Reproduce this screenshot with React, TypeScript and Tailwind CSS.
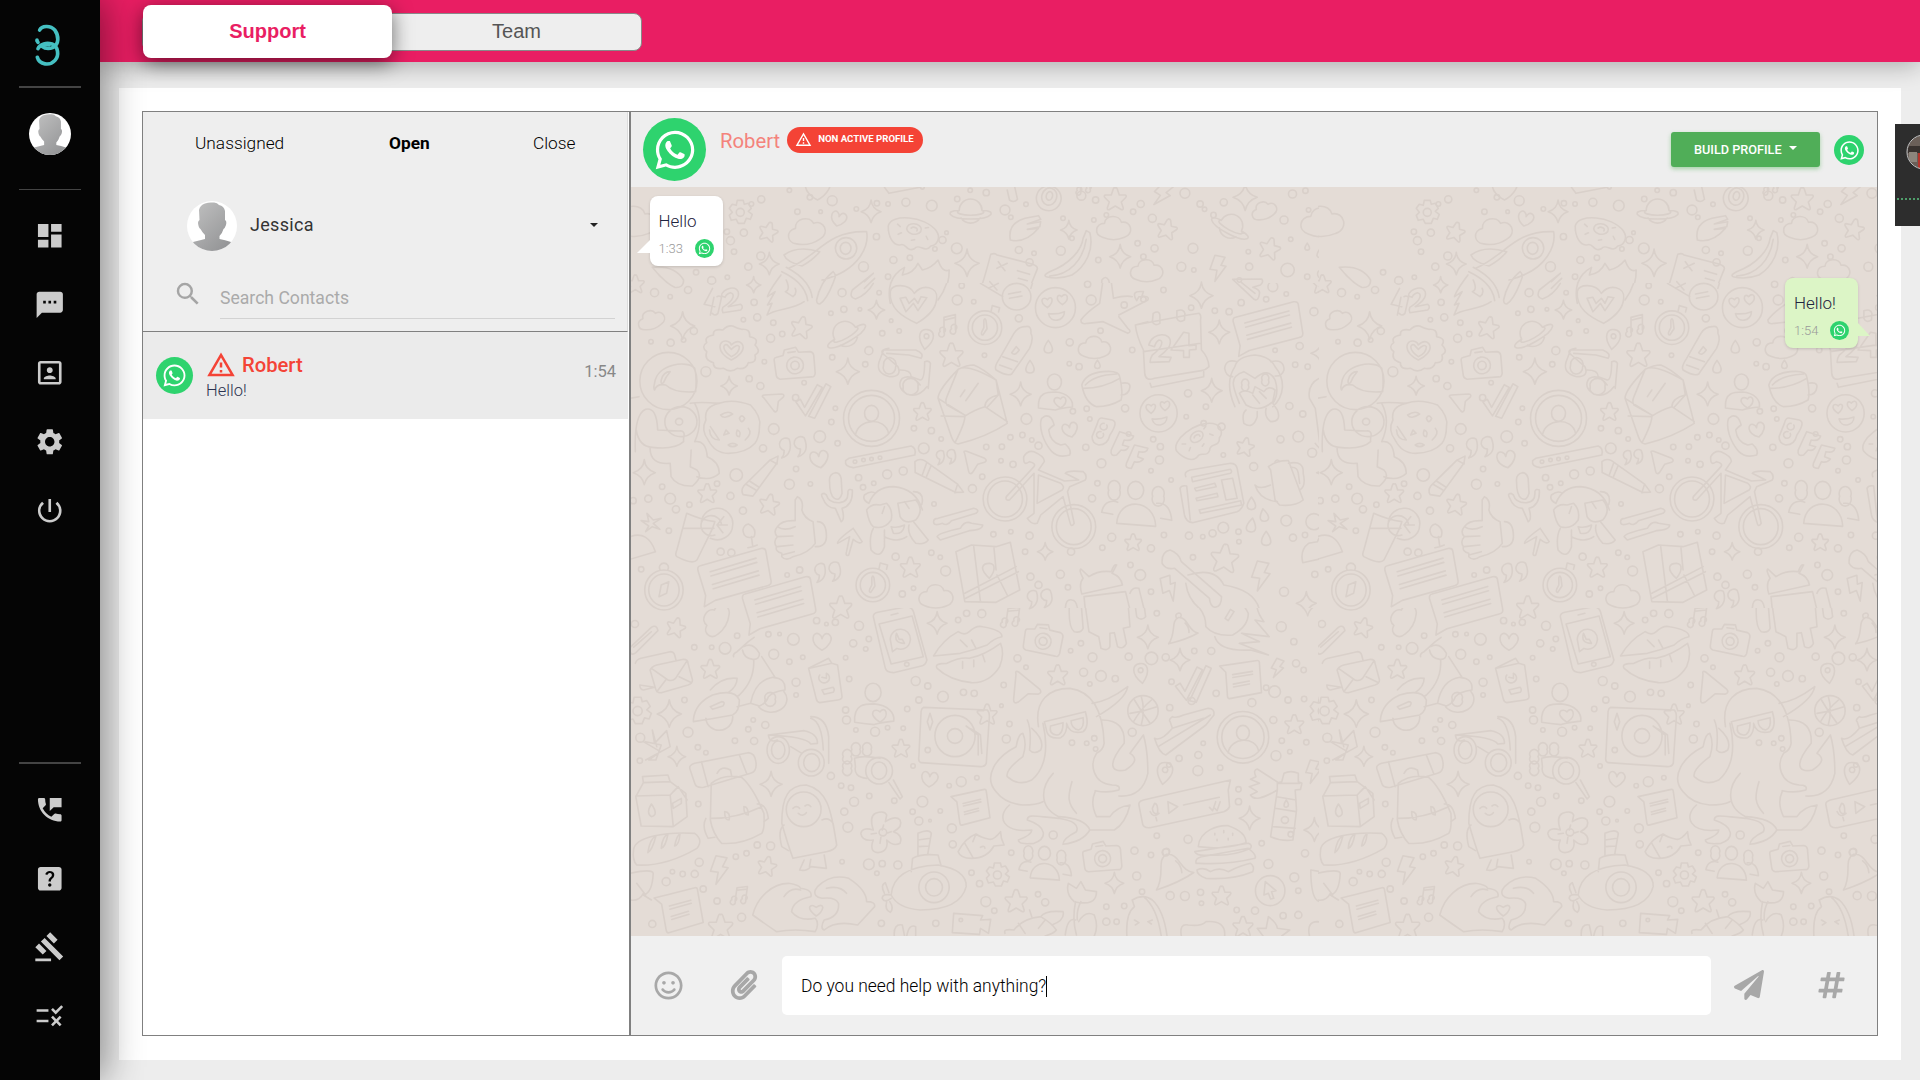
import type { ReactNode } from "react";
import {
  MdDashboard,
  MdGavel,
  MdHelpCenter,
  MdOutlineWarningAmber,
  MdPermPhoneMsg,
  MdPortrait,
  MdPowerSettingsNew,
  MdRule,
  MdSearch,
  MdSettings,
  MdTextsms,
} from "react-icons/md";
import { FaHashtag, FaPaperPlane, FaPaperclip, FaRegSmile, FaWhatsapp } from "react-icons/fa";

/* ---------- Wallpaper doodles ---------- */

const SHAPES: Record<string, string> = {
  star: "M0-11 Q1-12 2-10 L4-4 L10-4 Q12-3 10-1 L6 3 L8 9 Q8 12 5 10 L0 7 L-5 10 Q-8 12 -8 9 L-6 3 L-10-1 Q-12-3 -10-4 L-4-4 L-2-10 Q-1-12 0-11Z",
  spark: "M0-13 Q1-3 11 0 Q2 3 0 12 Q-2 3 -11 0 Q-1-3 0-13Z",
  heart: "M0 9 C-15 1 -9-12 -3-8 Q0-6 0-3 Q2-10 7-8 C14-3 6 6 0 9Z",
  cloud: "M-11 9 C-20 6 -18-5 -9-5 C-8-14 6-14 8-6 C18-8 21 6 11 9 C4 12 -4 12 -11 9Z",
  gear: "M-3-12 H3 L4-8 L8-9 L11-4 L8-1 L12 2 L10 7 L6 6 L4 11 H-2 L-4 7 L-9 8 L-11 3 L-8 0 L-11-4 L-8-8 L-4-7Z M4 0 A4 4 0 1 1 -4 0 A4 4 0 1 1 4 0Z",
  bolt: "M-3-13 L7-11 L3-3 L8-2 L-3 13 L-1 2 L-8 1Z",
  saturn: "M-12-2 A12 12 0 0 1 12-2 M-10 6 A12 12 0 0 0 10 6 M-12-2 C-28-2 -24 7 0 7 C24 7 28-2 12-2 C18 1 8 3 0 3 C-8 3 -18 1 -12-2",
  donut: "M-25-3 C-24-16 10-18 23-5 C30 2 25 10 20 11 C15 20 8 9 4 16 C-3 21 -5 11 -10 14 C-18 17 -24 6 -25-3Z M-6-5 A7 5 0 1 1 8-2 A7 5 0 1 1 -6-5 M-2-4 A3 2 0 1 1 4-2 M-16-6 L-13-4 M-14 4 L-11 2 M0 8 L3 7 M14 2 L16 5 M12-6 L15-7",
  camera: "M-17-8 L-10-9 L-8-14 L3-15 L5-10 L16-9 Q19-8 19-5 L18 12 Q17 16 14 15 L-16 13 Q-19 12 -19 9 L-19-5 Q-19-8 -17-8Z M8 2 A8 8 0 1 1 -8 2 A8 8 0 1 1 8 2Z M4 2 A4 4 0 1 1 -4 2 A4 4 0 1 1 4 2Z M-5-11 H2",
  pin: "M0 10 C-12-3 -7-11 0-11 C7-11 12-3 0 10Z M2.500-4 A2.500 2.500 0 1 1 -2.500-4 A2.500 2.500 0 1 1 2.500-4Z",
  drop: "M0-7 C8 4 4 7 0 7 C-4 7 -8 4 0-7Z",
  clock: "M16 0 A16 16 0 1 1 -16 0 A16 16 0 1 1 16 0Z M12 0 A12 12 0 1 1 -12 0 A12 12 0 1 1 12 0Z M-1-7 Q0-10 1-7 L2 1 L-2 7 Q-4 7 -3 4 L-1 0Z M6-16 L7-21 L14-19 L13-15",
  smiley: "M20 0 A20 20 0 1 1 -20 0 A20 20 0 1 1 20 0Z M-8 0 C-18-7 -12-12 -8-8 C-4-13 0-7 -8 0Z M7-3 C-2-9 3-15 6-11 C12-17 15-8 7-3Z M-7 6 Q2 7 9 4 C9 14 -5 16 -7 6Z",
  message: "M-30-14 L28-20 Q32-20 32-17 L32 11 Q32 15 28 15 L-22 20 L-33 24 L-30 14 L-33-10 Q-33-14 -30-14Z M-22-7 L22-12 M-22-3 L22-8 M-22 5 L22 0 M-22 9 L22 4",
  note: "M-8-18 L18-20 Q20-20 20-18 V14 L-14 18 Q-16 18 -16 15 L-16-10 L-22-17Z M-9-7 L12-9 M-9-4 L12-6 M-9 3 L8 1 M-9 6 L8 4",
  notes: "M-5 8 V-8 L7-11 V5 M-5-5 L7-8 M-5 8 A3 3 0 1 1 -9 7 A3 3 0 1 1 -5 8 M7 5 A3 3 0 1 1 3 4 A3 3 0 1 1 7 5",
  ticks: "M-16 4 L-12 1 L-7 8 L2-15 L7-13 L-5 16Z M-2 16 L10-17 L15-15 L4 17Z",
  play: "M-10-9 Q-12-12 -8-11 L10-4 Q13-2 10 0 L3 2 L-2 10 Q-5 13 -6 9Z",
  quote: "M-3-6 A5 5 0 1 0 -7 3 Q-7 7 -9 9 C-2 7 -1 0 -3-6Z M9-7 A5 5 0 1 0 6 2 Q6 6 4 8 C11 6 12 0 9-7Z",
  person: "M6-13 A7 8 0 1 1 -8-13 A7 8 0 1 1 6-13Z M-17 13 C-18-3 -8-3 0-3 C12-2 18 5 17 12 Q6 13 0 15 Q-10 14 -17 13Z M5 13 C-7 5 1 0 5 4 C9-2 15 7 5 13",
  profile: "M28 0 A28 28 0 1 1 -28 0 A28 28 0 1 1 28 0Z M23 0 A23 23 0 1 1 -23 0 A23 23 0 1 1 23 0Z M7-5 A7 8 0 1 1 -7-5 A7 8 0 1 1 7-5Z M-16 17 C-14 0 14-2 17 15",
  group: "M7-18 A8 9 0 1 1 -9-18 A8 9 0 1 1 7-18Z M-20 15 C-18-12 18-10 19 18Z M-17-18 A6 7 0 1 1 -28-18 A6 7 0 1 1 -17-18 M27-12 A6 7 0 1 1 16-12 A6 7 0 1 1 27-12 M-24 6 L-35 4 C-33-8 -23-8 -19-6 M24 10 L35 12 C34-1 28-6 20-5",
  pencil: "M-22 16 L-12 19 L18-12 L20-19 L11-16 L-20 7 Q-24 11 -22 16Z M11-16 L18-11 M-17 6 L-8 13 M-13 3 L-5 10",
  bell: "M-13 12 C-4 3 -8-8 0-10 C9-9 6 4 15 7 Q4 11 -13 12Z M-2-10 Q-3-14 1-14 Q4-13 2-10 M5-4 Q8 0 7 5",
  paperclip: "M-12 9 L8-10 Q13-13 14-7 L-6 13 Q-11 17 -12 9Z M-8 8 L8-6",
  nut: "M20 0 A20 20 0 1 1 -20 0 A20 20 0 1 1 20 0Z M12-3 A12 14 0 1 1 -12-3 A12 14 0 1 1 12-3Z M5-4 A5 7 0 1 1 -5-4 A5 7 0 1 1 5-4Z",
};

type Doodle = [shape: string, x: number, y: number, size?: number, turn?: number];
type Band = { dy: number; doodles: Doodle[]; paths: string[]; dots: string };

const BANDS: Band[] = [
  {
    dy: -7,
    doodles: [
      ["gear", 247, 97], ["heart", 467, 117, 0.8, 15], ["spark", 540, 95, 0.9], ["star", 310, 155, 0.85, 15], ["cloud", 395, 155, 1.1, -12],
      ["donut", 633, 157, 1, 8], ["saturn", 763, 97, 0.95], ["nut", 938, 55, 0.62, 15], ["star", 1087, 57], ["bolt", 1192, 42, 1, 25],
      ["spark", 1378, 52, 1.1], ["cloud", 1420, 92, 0.75, -20], ["saturn", 1345, 142, 0.95, 28], ["cloud", 1083, 145], ["star", 1203, 147, 0.9, 12],
      ["spark", 983, 150, 0.75], ["spark", 755, 250, 1.1], ["spark", 1098, 230, 0.95], ["cloud", 1157, 273, 0.95], ["bolt", 1317, 265, 1],
      ["star", 1433, 205, 0.95, 15], ["spark", 312, 252, 0.9], ["cloud", 10, 125, 1.3], ["cloud", 1550, 128, 1.25], ["drop", 1545, 220, 0.6],
      ["drop", 1517, 200, 0.5], ["heart", 420, 25, 1.3], ["notes", 1018, 15, 0.8], ["spark", 1280, 347, 1.05], ["spark", 277, 315, 0.65], ["star", 12, 312, 0.8],
    ],
    paths: [
      "M570 22 L580 40 L650 22 M845 30 L850 60 Q860 70 868 58 L862 22",
      "M932 290 Q925 285 940 275 C990 250 1012 205 1015 175 L1022 152 L1030 158 C1040 210 1020 260 990 285 Q960 300 932 290 M940 288 C985 285 1015 240 1022 178",
      "M355 265 C420 230 440 150 530 155 C535 190 520 270 430 300 M345 225 Q375 195 425 215 Q410 240 385 258 Q350 245 345 225 M350 262 C390 290 405 320 408 352 M340 275 C380 300 395 330 398 362 M455 275 Q460 280 460 290 C450 330 440 360 425 372 Q418 372 418 360 C422 330 435 295 455 275 M508 205 A24 32 0 1 1 460 205 A24 32 0 1 1 508 205 M495 205 A12 18 0 1 1 471 205 A12 18 0 1 1 495 205",
      "M338 285 C325 310 312 330 308 350 L325 335 L308 375 L318 370 L307 405 C325 385 365 390 390 365 M350 300 Q360 330 348 335 L365 350 Q375 340 370 325",
      "M852 180 Q845 130 885 115 L915 107 L920 118 L890 132 L920 125 L918 140 L890 148 L915 145 Q890 185 860 182Z",
      "M822 225 Q818 218 808 223 Q795 290 786 325 Q785 335 795 340 L850 365 M822 225 L900 252 Q915 258 912 268 L895 325 M898 350 A32 40 0 1 1 834 350 A32 40 0 1 1 898 350 M848 342 L875 335 M850 355 L878 348 M825 245 L840 272 M822 265 L845 250 M806 305 L822 330 M803 325 L825 310 M868 272 L895 283 M870 295 L890 302",
      "M583 370 C575 315 590 280 615 262 L610 285 Q635 280 645 250 L655 270 Q675 265 690 240 Q700 280 715 270 C715 310 705 340 690 360",
      "M1055 355 L1057 300 Q1065 285 1072 300 L1085 360 Q1110 335 1130 335 Q1135 320 1148 325 L1150 340 Q1165 335 1160 350 L1118 375",
      "M50 262 Q100 255 120 300 Q120 325 100 322 Q75 305 50 262",
      "M545 280 L498 330 Q490 352 505 357 Q530 345 545 310 M545 280 L525 305 M548 295 L525 325",
      "M1350 298 L1415 297 Q1420 305 1412 315 L1395 322 Q1412 330 1410 340 Q1408 365 1398 358Z M1370 308 L1400 340",
    ],
    dots: "294,58,8 272,72,5 357,31,5 375,95,6 403,52,6 427,95,4 453,62,11 507,87,5 553,70,6 578,72,5 618,67,9 655,22,4 676,77,12 709,158,4 733,57,6 762,31,5 798,38,7 840,90,11 853,112,5 887,73,5 1011,47,10 1043,60,7 1039,120,5 970,115,5 1067,105,5 1127,95,6 1144,72,8 1170,115,9 1243,40,11 1277,72,7 1307,105,6 1330,67,8 1137,190,6 1175,205,8 1261,205,11 1287,88,5 1465,120,9 1484,42,9 1513,32,6 1520,90,5 1555,60,9 1473,270,15 1480,178,5 217,155,6 255,158,8 225,182,9 233,215,6 265,260,8 183,302,9 218,292,5 293,228,9 552,170,7 590,240,8 627,233,6 523,260,11 578,290,6 683,207,5 700,180,8 732,205,12 871,210,8 895,247,8 905,220,5 965,212,10 990,175,5 1049,240,6 1025,313,7 1106,328,8 1150,230,6 1235,260,10 1263,270,5 1195,355,6 1365,300,5 1385,215,5 1387,260,8 1517,290,6 1549,282,9 150,350,5 148,277,6",
  },
  {
    dy: 83,
    doodles: [
      ["spark", 277, 45, 0.65], ["star", 12, 42, 0.8], ["spark", 552, 120, 0.75], ["spark", 118, 168, 1.1], ["star", 384, 172, 0.95, 12], ["cloud", 47, 150, 0.8, -20],
      ["camera", 369, 280, 1.05, -8], ["saturn", 484, 195, 1, -30], ["spark", 222, 348, 0.75], ["spark", 488, 305, 1.05], ["pin", 663, 210, 0.95, 8],
      ["notes", 714, 165, 0.95], ["star", 720, 255, 1.05], ["clock", 795, 173, 1.05], ["smiley", 953, 113, 1], ["smiley", 1184, 430, 0.93], ["spark", 1280, 77, 1.05],
      ["spark", 1320, 187, 0.95], ["spark", 1303, 362, 0.95], ["spark", 875, 373, 0.95], ["message", 1430, 170, 1.03, -9],
      ["cloud", 1040, 233, 0.95], ["drop", 937, 230, 0.9], ["drop", 896, 290, 0.9], ["drop", 1047, 283, 0.6], ["person", 953, 375, 1],
      ["profile", 541, 445, 1], ["ticks", 410, 390, 1.05, 8], ["play", 325, 393, 0.9, -25], ["star", 655, 425, 0.8], ["quote", 365, 530, 1.25],
      ["heart", 424, 568, 0.95, -10], ["heart", 986, 480, 0.8, -15], ["pencil", 295, 620, 0.95, -8], ["pencil", 690, 625, 1.05, 72], ["play", 772, 577, 1, 0],
      ["quote", 708, 560, 0.9], ["star", 173, 670, 0.85], ["star", 312, 703, 0.9, 10], ["spark", 32, 608, 1], ["donut", 1272, 510, 0.95, -35], ["star", 1378, 530, 0.8, 12],
      ["group", 1135, 715, 1], ["star", 1127, 817, 0.75], ["star", 1332, 865, 1.25, 5], ["spark", 930, 845, 0.7], ["bolt", 1413, 918, 1.15], ["bolt", 1208, 955, 1, -30],
      ["drop", 1392, 700, 0.9], ["drop", 1420, 735, 0.9, -10], ["drop", 1392, 765, 1, 10], ["drop", 1425, 805, 1], ["message", 235, 915, 1.08, -10],
      ["message", 335, 1000, 1.08, -10], ["clock", 544, 945, 1.05], ["quote", 443, 905, 1.2], ["star", 628, 892, 0.9], ["star", 472, 1012, 1], ["cloud", 685, 980, 1],
      ["quote", 918, 985, 1.15], ["star", 1550, 40, 0.9], ["spark", 1550, 250, 1], ["spark", 1558, 608, 0.8], ["spark", 1515, 1000, 0.9], ["cloud", 1157, 3, 0.95],
    ],
    paths: [
      "M185 55 L166 103 L190 110 M188 82 L180 135 M195 80 Q200 75 205 82 L197 130 Q190 140 184 130 M205 78 C205 55 245 40 243 75 Q242 90 220 110 L248 103 Q255 110 248 120 L208 128 Q205 120 208 112 C235 90 235 70 225 68 Q215 72 213 82Z",
      "M583 65 C585 40 625 40 637 70 C655 40 690 50 687 85 C685 125 655 150 642 160 C610 140 580 115 583 65Z M605 85 L618 125 L635 100 L645 122 L665 83 L652 80 L645 100 L637 85 L625 100 L618 82Z",
      "M583 100 C575 45 590 10 615 -8 M690 90 Q712 50 715 0",
      "M350 -8 C390 20 405 50 408 82 M340 5 C380 30 395 60 398 92 M455 5 Q460 10 460 20 C450 60 440 90 425 102 Q418 102 418 90 C422 60 435 25 455 5",
      "M338 15 C325 40 312 60 308 80 L325 65 L308 105 L318 100 L307 135 C325 115 365 120 390 95 M350 30 Q360 60 348 65 L365 80 Q375 70 370 55",
      "M545 10 L498 60 Q490 82 505 87 Q530 75 545 40 M548 25 L525 55 M50 -8 Q100 -15 120 30 Q120 55 100 52 Q75 35 50 -8",
      "M1350 28 L1415 27 Q1420 35 1412 45 L1395 52 Q1412 60 1410 70 Q1408 95 1398 88Z M1370 38 L1400 70",
      "M230 168 Q240 175 250 178 Q270 175 268 200 Q290 205 280 225 Q295 245 280 255 Q285 280 265 278 Q260 300 240 295 Q225 310 210 295 Q185 300 187 278 Q165 270 172 245 Q158 230 172 218 Q165 200 187 195 Q185 175 208 180 Q218 165 230 168Z M227 270 C190 245 200 210 215 213 Q225 215 227 225 Q240 208 250 220 C262 240 240 262 227 270Z M227 260 C205 240 208 222 217 224 L227 238 Q240 220 245 230 C245 245 235 255 227 260Z",
      "M150 333 A64 86 0 1 1 22 333 A64 86 0 1 1 150 333Z M55 340 C60 280 130 270 145 295 Q150 320 147 365 Q100 370 80 345 Q60 340 55 360 Q52 355 55 340Z M70 330 Q75 305 90 305 Q80 320 75 338 Q68 345 70 330Z M0 385 L20 380 M12 545 C10 480 15 430 35 418 Q60 410 62 480 L110 483 Q125 480 120 505 L120 515 Q100 540 50 532 Q20 530 14 480 M135 400 Q155 395 200 400 M145 400 C165 450 150 500 145 515 Q170 510 173 560 Q200 575 200 610 Q180 635 150 620 M45 535 Q45 585 90 580 L92 620 Q105 650 140 648 Q165 620 150 600 L135 590 L137 540 M150 455 A36 45 0 1 1 78 455 A36 45 0 1 1 150 455Z M118 455 A8 10 0 1 1 102 455 A8 10 0 1 1 118 455Z",
      "M290 470 Q290 500 280 520 Q260 550 220 550 Q190 550 175 510 Q158 480 170 450 Q165 410 200 400 Q230 385 270 405 Q295 440 290 470Z M180 470 L200 510 Q180 510 178 480 M203 435 Q220 420 230 432 Q210 450 203 435 M245 445 Q250 430 257 445 Q250 465 245 445 M240 480 Q250 485 245 500 Q235 500 240 480 M265 475 Q275 490 258 510 M215 480 L210 495 L222 490Z M220 525 Q230 515 240 525 Q230 535 220 525",
      "M795 0 Q785 25 785 40 L835 80 M898 55 L910 0 M898 80 A32 40 0 1 1 834 80 A32 40 0 1 1 898 80Z M848 72 L875 65 M850 85 L878 78 M806 35 L822 60 M803 55 L825 40",
      "M1060 25 Q1075 20 1078 35 L1083 85 Q1110 75 1125 80 M1095 135 L1160 90 Q1165 75 1140 80 L1135 92 M1060 25 L1052 100 Q1020 130 1010 150 Q1010 165 1025 160 L1060 155 L1115 190 Q1125 185 1115 175 L1095 140 M1135 92 Q1120 60 1150 65 L1145 85",
      "M885 170 Q900 165 898 190 Q905 205 895 235 L855 312 Q845 320 820 300 Q815 290 828 265 L860 190 Q870 170 885 170Z M835 260 L868 275 M828 285 L855 298 M865 230 L855 248 Q862 260 872 240Z",
      "M1132 165 L1160 155 M1190 150 L1225 142 M1250 135 L1275 130 Q1280 135 1278 150 L1280 240 Q1295 260 1297 290 Q1290 300 1280 302 L1175 325 Q1155 335 1153 310 L1150 240 Q1135 200 1132 165Z M1150 245 L1278 220 M1165 340 L1168 352 L1285 320 L1285 305 M1172 130 Q1185 120 1187 135 L1187 160 Q1175 170 1170 155Z M1225 122 Q1240 115 1243 130 L1242 150 Q1230 160 1225 145Z M1162 225 C1170 185 1215 185 1210 220 Q1210 235 1185 260 L1212 262 L1208 275 L1165 277 Q1165 265 1170 255 C1195 230 1195 210 1185 210 Q1178 215 1175 230Z M1240 187 L1212 240 L1240 242 V262 H1253 V240 L1268 238 V225 L1252 227 V190Z",
      "M580 235 Q555 240 570 255 L600 290 Q610 320 582 320 Q550 310 558 275 L568 240 Q610 240 640 240 Q660 250 652 265 L625 255 L575 250 M605 300 Q630 300 630 320 L650 330 Q660 330 660 275 Q670 270 673 280 L668 355 M665 350 Q645 385 620 372 Q595 350 610 325 Q630 310 650 345 M595 290 A14 20 0 1 1 568 285 A14 20 0 1 1 595 290 M645 350 A17 20 0 1 1 612 350 A17 20 0 1 1 645 350",
      "M770 285 Q790 295 820 330 L845 460 Q800 500 735 522 Q725 520 720 500 L690 385 Q690 360 735 298 Q755 285 770 285Z M735 298 Q755 280 820 330 L825 375 Q795 385 795 410 Q770 420 752 437 L710 405 Q705 395 710 380Z M697 438 L750 440 Q750 460 728 518 M690 385 L752 437 M795 410 L845 455 M825 375 L800 412 M740 380 L750 360 M752 392 L780 340",
      "M1060 445 Q1050 440 1047 460 L1035 500 Q1035 520 1050 525 Q1070 525 1075 495 Q1095 455 1080 450Z M1068 465 A8 10 0 1 1 1062 460 M1060 490 A8 10 0 1 1 1055 485 M1097 485 L1128 498 Q1125 515 1107 510 L1103 525 L1117 530 Q1112 545 1100 540 L1090 555 Q1075 560 1078 540Z M1130 525 L1160 535 Q1158 550 1140 545 L1137 560 L1150 567 Q1142 580 1130 575 L1123 595 Q1108 595 1112 580Z",
      "M930 438 Q945 435 950 465 Q940 475 938 480 C940 505 950 520 965 525 L975 522 Q990 540 985 555 Q960 565 945 545 C925 515 915 470 922 445Z",
      "M1012 345 Q1020 310 1060 305 Q1095 300 1097 320 Q1105 370 1100 390 Q1075 410 1045 410 Q1020 400 1012 345Z M1015 355 Q1060 355 1097 325 M1020 345 Q1040 315 1090 312 M1100 340 Q1120 335 1120 350 Q1118 375 1100 375",
      "M1355 290 Q1360 260 1400 255 Q1435 260 1445 290 C1470 330 1465 380 1440 410 M1355 290 C1335 330 1345 380 1355 410 M1350 320 Q1335 320 1332 295 Q1335 265 1360 275 M1435 275 Q1465 265 1465 300 Q1460 320 1445 318 M1380 420 Q1370 430 1375 460 Q1395 480 1405 440 L1405 425 M1425 415 Q1420 440 1435 455 Q1460 455 1450 420 L1440 400 M1365 400 C1350 350 1340 320 1375 305 L1400 325 Q1430 290 1445 330 Q1455 370 1440 400 M1385 345 A8 12 0 1 1 1371 345 A8 12 0 1 1 1385 345 M1430 330 A8 12 0 1 1 1416 330 A8 12 0 1 1 1430 330 M1365 370 L1380 405 Q1410 430 1440 395 L1445 360 Q1430 345 1420 365 L1400 350 L1395 370 Q1375 355 1365 370 M1395 375 L1410 400 M1410 365 L1425 385",
      "M490 565 L630 528 Q642 535 638 555 L500 593 Q480 590 483 572Z M508 575 A4 5 0 1 1 500 575 A4 5 0 1 1 508 575 M527 570 A4 5 0 1 1 519 570 A4 5 0 1 1 527 570 M545 567 A4 5 0 1 1 537 567 A4 5 0 1 1 545 567 M564 563 A4 5 0 1 1 556 563 A4 5 0 1 1 564 563",
      "M460 608 Q470 608 473 625 L475 670 Q470 695 458 685 Q447 675 447 635 Q445 612 460 608Z M435 670 Q425 670 432 685 Q440 715 460 715 L473 755 Q482 750 475 715 Q500 705 498 660 Q490 655 488 665 Q490 695 470 698 Q445 700 440 675Z",
      "M889 687 A49 66 0 1 1 791 687 A49 66 0 1 1 889 687Z M879 687 A39 54 0 1 1 801 687 A39 54 0 1 1 879 687Z M1043 770 A49 66 0 1 1 945 770 A49 66 0 1 1 1043 770Z M1033 770 A39 54 0 1 1 955 770 A39 54 0 1 1 1033 770Z M843 680 L905 590 Q910 580 895 575 Q880 590 882 560 Q890 540 905 545 Q930 560 928 575 L915 600 L973 633 L1005 630 L975 610 Q980 600 1015 605 Q1025 615 1020 630 L985 650 L980 665 L995 760 Q988 775 985 755 L970 680 L920 735 L912 760 Q900 765 890 745 L905 730 L905 610 L850 690 Q840 692 843 680Z M915 615 L965 640 Q975 650 968 660 L912 700Z",
      "M1245 620 Q1240 605 1255 600 L1345 580 Q1358 580 1360 595 L1375 700 Q1370 720 1360 725 L1260 758 Q1245 755 1242 735 L1232 655 Q1235 645 1247 648 L1255 750 M1258 622 L1345 598 Q1350 605 1345 610 L1260 635Z M1325 630 L1350 625 L1360 685 L1335 690Z M1265 655 L1310 640 L1313 650 L1268 663Z M1268 685 L1315 670 L1317 680 L1270 692Z M1275 720 L1368 692 L1370 705 L1278 730Z",
      "M1430 590 Q1450 570 1475 572 L1508 690 Q1490 710 1455 705 L1445 690 L1435 600Z M1400 645 Q1410 660 1435 645 M1400 645 Q1410 690 1450 695 M1475 580 Q1510 570 1508 610 Q1515 650 1500 660 M1480 592 Q1495 590 1497 610 L1500 640 M1445 575 Q1450 565 1455 575",
      "M375 680 Q390 690 385 720 Q390 745 410 755 L415 820 Q400 850 365 860 Q350 875 340 860 L340 850 Q325 845 328 830 Q320 815 330 800 Q320 785 330 770 Q340 750 370 752 Q370 720 370 690Z M420 755 Q440 755 440 800 Q440 830 415 830 M330 770 Q345 785 370 770 M330 800 L365 798 M330 830 L365 825 M340 855 L368 845",
      "M127 730 Q160 750 190 755 L185 775 L150 870 Q140 885 105 860 Q100 855 105 840 L118 775Z M118 775 H188 M205 765 A23 30 0 1 0 190 795 M230 765 A35 45 0 1 0 160 755 M230 765 A35 45 0 0 1 180 805 M195 765 L210 740 M195 765 L218 765 M195 765 L208 788 M265 762 Q285 775 278 800 Q255 810 253 780 Q255 765 265 762Z M272 800 L275 830 L264 833 M275 830 L285 825",
      "M535 700 Q550 650 590 650 Q640 655 655 720 M535 700 Q520 690 525 675 Q540 660 550 670 M635 665 Q655 665 655 690 Q655 705 650 708 M530 720 Q540 700 560 705 L575 700 Q590 720 585 750 Q570 780 545 770 Q535 760 530 720 M600 700 L640 690 Q660 720 640 750 Q615 765 605 740Z M570 710 L565 730 M615 695 L625 715 M585 770 Q600 775 615 765 Q612 795 590 790Z M545 775 Q535 800 540 840 Q560 870 570 830 L570 780 M635 755 L668 810 Q660 825 640 820 Q620 790 625 765 M570 800 Q600 820 620 800",
      "M680 755 Q680 745 690 745 L770 715 Q785 720 775 730 L720 752 Q710 770 700 760 Q680 770 680 755Z M688 800 Q690 790 740 775 Q750 750 765 760 L790 765 Q790 780 760 782 L695 810Z M500 775 L520 815 Q515 825 500 808 L490 855 Q482 860 485 845 L492 800 L465 820 Q463 810 500 775",
      "M730 845 L765 825 L820 830 L852 817 L873 960 L820 997 L750 995Z M750 970 L865 890 M752 985 L870 905 M770 830 L785 995 M815 830 L820 900 M822 915 L845 975 M805 925 C780 895 790 880 805 880 C820 880 818 905 805 925Z",
      "M1012 972 L1103 945 Q1100 920 1080 910 L1090 885 Q1085 880 1078 905 Q1050 900 1028 920 L1010 897 Q1005 900 1015 925 Q1005 940 1012 972Z M1017 980 L1110 965 L1120 1020 M1017 980 L1020 1020 M1120 970 Q1125 950 1140 955 L1152 1020 M975 1020 Q975 985 990 990 Q1000 990 1003 1020",
      "M1192 880 Q1190 845 1210 840 Q1230 850 1235 875 L1325 980 Q1325 1010 1310 1012 Q1300 1010 1298 985 L1220 895 Q1200 900 1192 880Z M1250 915 Q1310 890 1330 945 Q1400 960 1410 1020 M1245 940 Q1250 990 1280 1020",
      "M119 960 A43 60 0 1 1 33 960 A43 60 0 1 1 119 960Z M110 960 A34 48 0 1 1 42 960 A34 48 0 1 1 110 960Z M87 935 L82 970 L65 980 L70 945Z M85 898 A10 13 0 1 0 67 898",
      "M0 800 Q40 780 57 845 L0 868 M1568 795 Q1545 790 1540 815 L1520 820 Q1500 840 1507 878 L1568 860 M1535 520 C1550 550 1560 540 1568 550 M1565 315 Q1515 330 1522 385 L1535 415 L1545 520",
      "M38 730 L42 755 L25 752 L42 768 L35 785 L50 770 L67 778 L52 760 L70 745 L52 750Z",
    ],
    dots: "55,68,9 90,80,5 130,60,8 183,32,8 205,20,5 278,97,7 143,183,8 285,142,8 254,149,5 321,158,6 47,215,5 91,218,8 120,210,5 315,205,9 341,192,6 170,305,11 301,275,5 267,326,7 292,348,8 371,383,7 390,338,5 453,262,6 535,242,9 527,283,6 565,190,6 603,183,5 585,152,4 479,118,7 450,130,5 475,68,9 515,118,4 558,68,5 743,47,6 733,90,11 770,95,5 871,145,8 794,256,5 888,447,12 1025,43,7 1033,90,11 1054,182,6 1107,105,7 1150,88,6 985,217,8 984,281,5 1006,290,7 1125,240,6 1195,60,6 1257,113,6 1310,122,6 1342,125,7 1369,98,7 1440,50,11 1425,88,6 1470,72,5 1532,125,9 1445,241,5 1500,228,8 1490,284,6 1518,290,6 1477,408,8 1507,432,7 1397,590,9 1497,500,12 1457,508,8 1325,470,8 1285,460,6 1250,370,8 1290,410,6 1246,440,5 1109,415,8 1023,416,6 1030,447,5 992,424,6 1021,532,7 1056,580,10 1117,492,5 1172,508,6 1188,530,7 1186,570,9 1167,602,5 1329,555,5 322,477,12 298,535,8 425,500,13 451,456,6 460,415,5 465,520,6 372,597,6 357,643,11 238,615,14 195,641,6 404,642,5 225,678,8 253,722,8 90,686,12 103,718,8 133,704,6 72,650,6 41,686,8 7,692,7 658,535,12 636,475,6 675,482,7 697,507,5 852,502,6 879,495,6 915,527,8 900,510,5 798,531,6 833,530,6 831,572,5 858,583,7 576,613,10 612,603,9 512,623,7 522,652,6 546,640,5 767,656,9 789,620,6 681,702,5 1035,685,8 1047,640,6 1079,802,9 1058,833,6 1167,835,8 1196,795,6 1252,797,8 1283,800,5 1305,790,8 1329,773,12 1363,785,6 1364,815,5 1261,862,6 1470,752,12 1485,803,8 1512,795,6 1532,755,18 1528,548,10 1212,630,5 203,845,8 227,848,8 87,782,6 25,898,6 814,793,6 853,785,5 895,797,8 885,845,6 988,845,8 595,860,8 675,848,6 695,862,5 352,915,5 380,900,7 707,903,11 610,972,7 635,955,5 897,920,8 915,945,8 964,913,9 981,952,6 1143,915,12 1121,885,6 1167,965,6 1534,913,7 1465,965,10",
  },
  {
    dy: 413,
    doodles: [
      ["message", 335, 10, 1.08, -10], ["cloud", 685, -10, 1], ["quote", 918, -5, 1.15],
      ["star", 103, 82, 0.85, 15], ["cloud", 192, 60, 1, -60], ["paperclip", 28, 115, 1.1], ["heart", 430, 125, 0.95], ["spark", 688, 70, 0.9], ["notes", 855, 50, 0.95, 8],
      ["camera", 926, 118, 1, 8], ["bell", 1233, 85, 1.1, -10], ["spark", 1160, 112, 0.95], ["spark", 1232, 180, 0.9], ["spark", 1518, 15, 0.9],
      ["star", 180, 207, 0.85], ["person", 547, 322, 1.15], ["star", 958, 225, 0.9], ["pin", 1145, 222, 0.95, -8], ["ticks", 1262, 250, 1.1, 5], ["note", 1370, 242, 0.95, -4],
      ["bolt", 1450, 205, 0.75, 10], ["play", 885, 270, 1.35, 18], ["gear", 17, 333, 1.15], ["gear", 1552, 333, 1.15], ["spark", 88, 342, 1.1], ["star", 800, 343, 0.9],
      ["profile", 1373, 412, 0.92], ["star", 1488, 373, 0.85], ["star", 607, 445, 0.8], ["spark", 105, 470, 0.8], ["spark", 316, 553, 1], ["heart", 671, 538, 0.85, 5],
      ["note", 765, 625, 0.85, -8], ["pin", 1197, 522, 1.05, 10], ["spark", 1388, 655, 0.95], ["spark", 1533, 690, 0.95], ["bolt", 1530, 515, 0.9], ["bolt", 200, 810, 1.1],
      ["star", 307, 798, 0.85, 12], ["gear", 823, 825, 1], ["star", 865, 903, 1], ["group", 930, 800, 0.75], ["camera", 1058, 770, 1, -8], ["bell", 1210, 805, 1.45, -15],
      ["spark", 1085, 850, 0.85], ["star", 1325, 887, 0.85], ["note", 112, 935, 1.05, -10], ["notes", 247, 885, 0.85, 8], ["star", 203, 980, 1.1], ["star", 1373, 980, 0.9], ["star", 472, 22, 1],
    ],
    paths: [
      "M119 -30 A43 60 0 1 1 33 -30 M110 -30 A34 48 0 1 1 42 -30",
      "M545 50 Q545 40 555 37 L620 20 Q632 22 635 35 L665 180 Q662 195 655 197 L590 218 Q575 218 572 205Z M558 72 L632 48 L657 170 L585 192Z M585 45 L600 40 M625 193 A5 6 0 1 1 615 193 A5 6 0 1 1 625 193 M588 155 L583 118 C585 75 630 80 628 120 C625 150 605 150 598 145Z M597 100 Q590 130 615 130 L610 118 L603 118Z",
      "M680 168 Q700 120 735 95 Q750 108 760 95 Q775 75 790 80 Q835 90 833 110 Q815 115 800 135 Q770 150 740 160 L680 168Z M688 205 Q680 190 710 190 Q740 170 760 175 Q795 165 830 130 Q840 160 828 200 Q805 250 765 248 Q715 240 688 205Z M740 120 L755 140 M765 120 L775 145 M745 205 V185 M770 200 V180 M795 185 L790 165",
      "M12 190 Q15 178 25 175 L90 155 Q98 155 100 165 L103 180 M55 262 L30 270 Q22 268 22 255Z M45 210 Q48 200 60 195 L120 178 Q130 178 130 190 L140 240 Q140 250 130 255 L70 278 Q60 280 57 265Z M48 205 L85 240 Q95 245 102 235 L128 182 M60 275 L80 240 M138 248 L110 230",
      "M232 170 Q230 160 240 155 L265 125 L278 112 M255 140 Q275 125 290 160 Q290 180 275 178 Q255 175 252 150 M277 178 Q280 240 245 285 L240 290 M295 170 L325 232 M142 360 Q145 310 185 285 Q235 265 245 300 Q245 335 230 345 Q190 355 142 365Z M180 270 Q205 230 240 235 Q240 260 220 278 M270 310 Q280 240 320 232 Q350 235 347 270 Q320 275 310 290 Q305 310 290 318Z M345 275 A34 38 0 1 1 288 320 M325 298 A12 15 0 1 1 303 298 A12 15 0 1 1 325 298 M170 355 A30 38 0 1 0 230 350 M180 320 L205 305 Q215 305 208 318 L185 328Z M240 320 L270 310",
      "M400 205 L445 175 L452 190 L465 195 L475 290 Q475 298 465 300 L425 308 Q418 305 417 295Z M402 205 L452 190 M425 225 A12 15 0 1 0 440 220 V235 L430 232 M430 270 L455 262 Q460 270 455 277 L435 283Z",
      "M658 322 L800 330 Q805 335 805 350 L798 490 Q795 500 785 500 L652 488 Q645 485 647 470 L652 335 Q653 325 658 322Z M773 408 A45 62 0 1 1 683 408 A45 62 0 1 1 773 408Z M745 408 A17 22 0 1 1 711 408 A17 22 0 1 1 745 408Z M753 378 L780 405 L780 465 M760 385 Q770 390 785 405 L788 460 M672 340 L678 365 L672 390 L666 365Z M673 450 A6 8 0 1 1 661 450 A6 8 0 1 1 673 450Z",
      "M915 380 C905 300 940 265 985 265 C1040 275 1060 340 1062 430 Q1060 450 1045 460 C1030 490 1035 550 1080 555 Q1100 555 1095 570 Q1070 580 1042 572 M925 370 C935 430 935 500 900 540 Q870 560 845 530 Q840 510 880 470 Q890 430 880 400 Q870 400 865 440 C820 470 790 530 820 575 Q840 610 880 615 Q910 615 925 605 M890 360 Q900 390 895 450 Q905 465 920 450 Q930 420 900 385 M948 520 C920 560 915 620 960 650 Q1020 655 1030 690 L1085 690 Q1110 670 1120 615 Q1090 620 1075 650 L1045 650 Q1030 610 1042 575 M1058 360 Q1110 360 1107 430 C1070 490 1075 520 1110 510 Q1145 480 1120 460 L1150 405 Q1160 450 1160 520 C1150 580 1120 590 1095 588 M1035 310 Q1070 305 1115 260 Q1110 300 1045 350 M850 615 C820 650 835 700 900 690 Q900 705 870 720 Q870 735 905 730 C935 715 935 680 890 660 C890 640 910 650 960 655 M1030 690 Q1015 725 970 733 Q970 715 1000 695 Q1010 665 960 655 M990 545 C980 590 980 610 1000 640",
      "M928 365 L1020 335 Q1030 380 1015 395 Q985 405 978 370 Q980 400 965 413 Q935 420 932 385Z M942 378 L970 368 Q970 405 955 405 Q938 402 942 378Z M988 362 L1015 353 Q1018 385 1005 390 Q988 385 988 362Z",
      "M1183 332 A34 45 0 1 1 1115 332 A34 45 0 1 1 1183 332Z M1130 300 Q1145 335 1165 370 M1168 300 Q1145 325 1128 365 M1120 340 Q1150 335 1180 320 M1145 288 Q1155 330 1145 376",
      "M1175 415 Q1190 425 1215 385 L1210 365 Q1205 360 1215 350 Q1225 355 1240 345 L1295 325 Q1310 325 1308 345 L1290 375 L1200 465 Q1185 460 1175 415Z M1183 440 L1300 345 M1215 385 L1285 355",
      "M35 425 L70 435 L58 480 L42 480 L68 455 L30 425 M50 390 L55 430 L82 392 L90 440 L35 480 M50 390 L60 440",
      "M310 405 L390 392 Q420 400 420 430 L405 432 Q395 410 310 405 Q312 430 330 420 M357 450 A25 40 0 1 1 307 450 A25 40 0 1 1 357 450Z M347 450 A15 27 0 1 1 317 450 A15 27 0 1 1 347 450Z M435 488 A29 40 0 1 1 377 488 A29 40 0 1 1 435 488Z M425 488 A18 27 0 1 1 389 488 A18 27 0 1 1 425 488Z M360 440 L385 460 M405 350 Q440 350 445 410 V490 M405 355 Q430 365 433 450",
      "M135 510 Q130 495 145 490 L265 458 Q280 460 282 485 Q285 515 270 520 L165 562 Q148 565 145 550Z M160 485 L175 560 M245 465 L262 523 M180 660 L182 550 Q210 520 250 532 Q275 560 300 640 Q302 690 295 700 Q250 735 205 730 Q185 700 180 660Z M182 655 Q240 655 295 620 M170 655 Q160 680 175 715 L190 712 M285 612 Q305 610 310 655 L300 665 M212 635 Q225 635 222 660 Q212 660 212 635Z M255 620 Q265 620 265 645 Q255 645 255 620Z M195 520 Q205 495 225 510 L228 530",
      "M28 530 L85 525 L90 545 L125 580 L128 650 L97 680 L25 678 L13 590 L30 548Z M30 548 L90 545 M13 588 L90 585 L97 680 M90 585 L108 560 L128 600 M48 612 Q65 645 48 650 Q35 640 48 612Z M95 610 L115 595 V610 L97 625Z",
      "M8 750 C10 710 80 695 145 700 Q165 720 150 745 Q80 800 15 795 Q5 780 8 750Z M40 758 Q45 715 58 708 Q50 750 40 758 M70 745 Q72 710 85 702 Q80 740 70 745 M100 738 Q105 705 112 702 Q110 735 100 738",
      "M365 775 Q355 740 340 670 C340 590 355 555 395 555 C440 570 450 620 463 735 Q460 750 440 755 L365 775Z M428 628 A39 52 0 1 1 350 628 A39 52 0 1 1 428 628Z M365 625 Q373 615 380 625 M392 618 Q400 610 405 620 M377 640 Q387 652 395 638 M430 660 Q445 650 455 670 L463 735 M345 675 Q330 690 340 740 L355 752 M390 780 L380 810 Q395 815 405 800 L440 805 L435 765 M405 778 L402 800",
      "M550 640 Q570 630 575 645 L572 665 Q595 645 605 660 Q612 680 590 695 Q612 705 605 730 Q590 740 575 720 Q580 755 555 758 Q535 755 545 720 Q520 725 517 700 Q520 680 545 690 Q535 650 550 640Z M565 690 L568 675 M575 700 L585 695 M562 712 L560 730 M552 700 L540 702 M575 697 A8 10 0 1 1 558 697 A8 10 0 1 1 575 697",
      "M585 885 Q590 800 690 795 Q755 810 753 860 Q740 930 650 930 Q600 925 585 885Z M630 815 L633 775 Q650 760 690 765 L697 798 M645 768 V700 Q670 685 675 700 L667 762 M645 720 L672 715 M645 740 L670 738 M715 862 A34 46 0 1 1 647 862 A34 46 0 1 1 715 862Z M700 862 A19 26 0 1 1 662 862 A19 26 0 1 1 700 862Z M585 885 Q565 880 565 895 Q570 910 585 895 M570 880 Q560 855 572 848 L580 878 M575 905 Q570 930 583 937 Q592 925 582 905",
      "M735 755 Q750 715 775 702 Q785 712 805 718 Q815 720 830 695 L832 715 L838 735 L815 738 Q800 775 765 775 Q740 775 735 755Z M750 730 L768 772 M775 702 L768 725 M785 742 Q795 735 795 745",
      "M328 995 Q290 960 275 945 C285 890 320 850 355 850 Q380 855 382 865 Q410 870 405 890 Q365 900 362 935 Q380 965 415 955 Q425 970 415 995 Q370 985 328 995Z M345 890 Q360 860 382 870 M420 860 Q450 820 490 835 Q530 870 530 905 Q550 905 548 920 L510 975 Q460 960 435 990 Q425 985 435 960 Q470 950 467 910 Q460 890 430 895 Q410 890 415 870Z M440 865 Q470 855 485 880 M417 948 C395 925 402 915 410 917 L417 922 Q430 910 432 922 C430 935 425 942 417 948Z",
      "M0 820 Q50 805 52 820 Q50 880 30 885 L48 900 M0 900 Q20 905 30 880 M15 850 L35 885 M1525 810 L1568 820 M1525 810 Q1525 900 1545 905 L1568 890",
      "M1140 615 Q1138 605 1150 600 L1345 540 L1340 570 L1343 620 Q1340 630 1330 635 L1165 683 Q1150 685 1148 670Z M1205 605 L1227 620 L1207 640Z M1240 615 L1320 592 M1175 610 Q1183 610 1182 640 Q1172 645 1170 625Z M1165 635 Q1172 655 1185 640 M1178 652 L1180 662 M1298 622 L1305 632 L1312 605 M1310 625 L1315 632 L1322 605",
      "M1465 520 Q1480 510 1497 520 V545 L1505 550 L1502 568 L1490 570 L1493 630 L1485 720 Q1460 725 1435 710 L1450 570 V548 L1460 545Z M1450 550 H1500 M1448 590 L1492 600 M1445 625 L1492 635 M1440 680 L1490 685 M1475 660 A8 10 0 1 1 1459 660 A8 10 0 1 1 1475 660Z M1470 600 Q1460 620 1470 622 Q1480 618 1470 600Z M1455 550 L1405 507 Q1395 510 1402 530 L1390 538 L1410 550 L1387 560 L1405 575 L1390 585 Q1400 610 1450 570",
      "M1273 740 C1275 690 1320 675 1340 677 Q1380 695 1380 728 Q1330 750 1273 740Z M1265 755 L1385 730 Q1395 735 1390 745 Q1350 770 1300 765 Q1270 770 1265 755Z M1268 790 Q1265 775 1280 770 L1385 745 Q1405 765 1400 775 Q1340 795 1275 790Z M1270 810 Q1285 800 1300 815 Q1320 800 1340 815 Q1370 795 1390 790 Q1400 800 1395 815 Q1350 840 1290 835 Q1270 825 1270 810Z M1310 700 V705 M1330 692 V698 M1350 700 V706 M1315 718 V722 M1340 715 V720",
      "M1467 872 A33 45 0 1 1 1401 872 A33 45 0 1 1 1467 872Z M1423 845 L1447 872 L1437 875 L1442 895 L1435 897 L1430 880 L1420 885Z",
      "M725 940 L790 947 L785 960 L808 958 L803 1000 L785 985 L783 1003 L722 998Z M745 960 A4 5 0 1 1 737 960 A4 5 0 1 1 745 960Z M840 1000 Q835 985 860 990 Q880 955 920 950 Q945 970 955 990 Q950 1000 930 1008 M895 930 L900 950 M920 950 Q930 930 970 935 Q975 960 945 975 M870 970 L885 1000 M930 960 L915 985",
      "M995 905 Q975 880 982 850 L1000 865 L1010 845 L1020 870 L1045 875 Q1045 920 995 905Z M998 905 Q990 960 1000 1005 M1010 905 Q1000 930 1002 960 M998 960 Q980 950 975 1005 M1005 965 Q1020 930 1040 945 Q1050 980 1040 1008",
      "M1113 1008 Q1110 940 1130 920 L1125 900 Q1150 880 1170 900 Q1195 930 1203 1008 M1150 890 Q1180 920 1190 1008 M1130 960 L1140 968 L1132 975 M1170 960 L1160 965 L1168 972",
      "M1235 1008 Q1230 970 1250 975 Q1280 980 1290 965 Q1335 960 1332 1008 M1418 1008 L1405 985 L1425 985 L1430 950 Q1450 970 1450 985 L1478 990 L1460 1008 M1522 1008 Q1515 965 1540 965 Q1568 970 1565 1008",
      "M985 0 Q980 80 995 95 Q1010 100 1015 85 L1010 0 M1018 0 L1028 95 L1050 110 L1055 145 Q1070 155 1075 140 L1075 100 L1085 98 L1092 140 Q1105 150 1112 130 L1105 85 L1120 80 L1115 0 M1130 0 L1135 50 Q1145 65 1155 50 L1150 0",
      "M1255 0 Q1290 30 1290 80 Q1310 110 1350 105 Q1385 80 1385 40 Q1370 0 1350 0 M1310 110 Q1320 155 1390 150 L1430 165 L1365 130 L1410 125 L1370 100 L1432 110 L1400 60 L1420 65 Q1400 30 1405 0 M1333 55 L1345 28 L1353 35 L1340 62Z",
      "M505 500 L503 475 Q520 465 560 475 M505 500 Q500 530 530 535 M588 512 A30 40 0 1 1 528 512 A30 40 0 1 1 588 512Z M575 512 A17 26 0 1 1 541 512 A17 26 0 1 1 575 512Z M580 548 L605 597 L610 590 L590 540 M495 470 A10 14 0 1 1 478 470 A10 14 0 1 1 495 470 M515 448 A10 14 0 1 1 497 448 A10 14 0 1 1 515 448 M540 448 A10 14 0 1 1 522 448 A10 14 0 1 1 540 448 M495 505 A10 14 0 1 1 478 505 A10 14 0 1 1 495 505",
      "M592 1008 Q590 970 610 975 L615 1008 M620 1008 Q625 970 640 980 L640 1008",
    ],
    dots: "11,72,8 144,142,6 183,142,5 213,145,13 240,107,6 310,103,6 335,102,4 366,118,13 418,62,7 440,72,4 460,67,7 513,77,10 535,117,6 322,163,11 357,185,6 387,172,5 500,130,8 528,147,5 483,173,5 372,247,9 372,285,5 491,237,6 640,243,10 667,258,7 647,300,7 701,290,12 747,277,7 771,280,7 735,60,6 754,40,7 788,41,9 868,175,8 887,202,5 837,255,6 850,372,6 832,317,4 1036,172,10 1010,130,6 987,152,5 1016,217,9 1055,228,12 1087,236,7 1030,252,5 1117,170,8 1168,175,14 1180,40,6 1200,172,8 1264,153,6 1302,153,8 1213,245,6 1209,323,7 1258,303,8 1313,280,7 1393,308,9 1425,263,6 1444,275,13 1474,300,7 1510,297,6 1487,125,7 1492,190,8 1459,80,11 1435,10,7 1509,210,6 1441,360,8 1460,422,6 1447,467,11 1515,427,6 1478,455,5 1284,430,5 1273,465,8 1230,475,7 1207,495,5 1322,503,6 1272,512,11 1125,397,9 1040,415,6 1023,430,5 1043,447,5 990,428,6 843,417,9 122,300,6 130,397,11 152,442,6 170,458,5 23,413,10 22,482,6 265,388,6 303,375,8 276,360,5 278,423,8 485,360,9 483,330,7 506,390,5 549,395,10 577,383,5 612,385,5 621,327,6 235,422,6 450,528,8 473,557,6 495,563,6 502,605,10 536,588,6 592,602,6 634,498,5 655,605,12 715,557,5 742,545,11 777,533,5 633,635,6 647,663,9 672,662,3 721,685,10 695,633,5 480,635,8 488,682,11 475,785,5 535,793,12 565,791,7 600,795,9 553,820,5 285,735,7 315,738,9 261,760,6 237,770,6 155,787,9 145,822,8 118,822,6 95,815,5 81,845,9 164,867,7 195,903,7 153,612,6 250,952,9 50,972,8 723,733,8 854,758,6 765,818,6 783,851,7 797,905,11 816,932,6 914,883,6 930,907,8 1135,828,9 1147,875,6 1167,765,6 1200,757,8 1130,752,8 1180,707,6 1250,718,9 1210,887,9 1243,888,10 1278,877,7 1280,910,5 1359,930,6 1430,792,10 1488,832,10 1512,760,8 1555,765,10 1415,730,6 1480,703,6 1363,605,7 1363,568,6 1558,625,7 1497,872,6 1463,947,7 1497,945,8 1400,932,8 1067,920,6 1107,918,6 1067,965,8 1090,965,6 948,705,9 563,970,7 685,970,7",
  },
];

function BandArt({ band }: { band: Band }) {
  return (
    <g transform={`translate(-1 ${band.dy}) scale(0.44643 0.33333)`}>
      {band.doodles.map(([shape, x, y, size = 1, turn = 0], i) => (
        <path
          key={`s${i}`}
          d={SHAPES[shape]}
          vectorEffect="non-scaling-stroke"
          transform={`translate(${x} ${y}) scale(${2.24 * size} ${3 * size}) rotate(${turn})`}
        />
      ))}
      {band.paths.map((d, i) => (
        <path key={`p${i}`} d={d} vectorEffect="non-scaling-stroke" />
      ))}
      {band.dots.split(" ").map((dot, i) => {
        const [x, y, r] = dot.split(",").map(Number);
        return <ellipse key={`d${i}`} cx={x} cy={y} rx={r} ry={r * 1.34} vectorEffect="non-scaling-stroke" />;
      })}
    </g>
  );
}

function Wallpaper() {
  return (
    <svg className="absolute inset-0 h-full w-full" viewBox="0 0 1246 749" preserveAspectRatio="none" aria-hidden="true">
      <defs>
        <clipPath id="tile-clip">
          <rect width="688" height="749" />
        </clipPath>
        <clipPath id="top-clip">
          <rect width="700" height="96" />
        </clipPath>
        <clipPath id="mid-clip">
          <rect y="96" width="700" height="325" />
        </clipPath>
        <clipPath id="low-clip">
          <rect y="421" width="700" height="328" />
        </clipPath>
        <g id="tile" clipPath="url(#tile-clip)" fill="none" stroke="#d9d0ca" strokeWidth="1.6" strokeLinejoin="round" strokeLinecap="round">
          <g clipPath="url(#top-clip)"><BandArt band={BANDS[0]} /></g>
          <g clipPath="url(#mid-clip)"><BandArt band={BANDS[1]} /></g>
          <g clipPath="url(#low-clip)"><BandArt band={BANDS[2]} /></g>
        </g>
      </defs>
      <use href="#tile" />
      <use href="#tile" x="687" />
    </svg>
  );
}

/* ---------- Shared pieces ---------- */

function Avatar({ className }: { className: string }) {
  return (
    <svg viewBox="0 0 50 50" className={className} aria-hidden="true">
      <defs>
        <linearGradient id="skin" x1="0" y1="0" x2="1" y2="1">
          <stop offset="0" stopColor="#c4c4c4" />
          <stop offset="1" stopColor="#8c8d8f" />
        </linearGradient>
        <clipPath id="round">
          <circle cx="25" cy="25" r="25" />
        </clipPath>
      </defs>
      <circle cx="25" cy="25" r="25" fill="#fff" />
      <path
        clipPath="url(#round)"
        fill="url(#skin)"
        d="M12.500 19 L12 9 Q13 4 18 2.500 Q22 1 26 1.500 Q30 1 32 4 Q37 5 38 10 L38 19 Q40 20 39 24 Q38 27 36.500 28 Q35 33 32.500 35 L32.500 38 Q38 39 44 41 Q47 43 50 50 H0 Q3 43 6 41 L18 38 V34 Q15 31 13.500 28 Q11.500 27 11 22 Q11 20 12.500 19Z"
      />
    </svg>
  );
}

function WhatsAppBadge({ className, glyph }: { className: string; glyph: string }) {
  return (
    <span className={`flex shrink-0 items-center justify-center rounded-full bg-[#2ed36e] text-white ${className}`}>
      <FaWhatsapp className={glyph} />
    </span>
  );
}

function NavIcon({ children }: { children: ReactNode }) {
  return <a className="flex h-[68.700px] items-center justify-center text-[31.500px] text-[#cccccc]">{children}</a>;
}

function Sidebar() {
  return (
    <aside className="relative z-20 flex w-[100px] shrink-0 flex-col items-center bg-[#050505] shadow-[4px_0_38px_rgba(0,0,0,0.45)]">
      <svg viewBox="0 0 180 180" className="mt-[15px] h-[60px] w-[60px]" fill="none" stroke="#45c0c2" strokeWidth="11" strokeLinecap="round">
        <path d="M59 45 C65 33 90 29 105 46 C117 63 117 86 100 97 C88 102 75 101 66 94" />
        <path d="M54 101 C60 86 80 83 96 87 C115 94 118 121 105 136 C90 153 58 150 52 127" />
        <path d="M68 94 Q76 89 88 91" strokeWidth="8" />
        <path d="M51 75 V77 L54 82" />
      </svg>
      <div className="mt-[11px] h-[2px] w-[62px] bg-[#444]" />
      <Avatar className="mt-[25px] h-[42px] w-[42px]" />
      <div className="mt-[34px] h-px w-[62px] bg-[#444]" />
      <nav className="mt-[11.500px] flex flex-col">
        <NavIcon><MdDashboard /></NavIcon>
        <NavIcon><MdTextsms /></NavIcon>
        <NavIcon><MdPortrait /></NavIcon>
        <NavIcon><MdSettings /></NavIcon>
        <NavIcon><MdPowerSettingsNew /></NavIcon>
      </nav>
      <div className="mt-auto h-[2px] w-[62px] bg-[#444]" />
      <nav className="mt-[11px] mb-[30px] flex flex-col">
        <NavIcon><MdPermPhoneMsg /></NavIcon>
        <NavIcon><MdHelpCenter /></NavIcon>
        <NavIcon><MdGavel /></NavIcon>
        <NavIcon><MdRule /></NavIcon>
      </nav>
    </aside>
  );
}

function TopBar() {
  return (
    <header className="relative z-10 h-[62px] shrink-0 bg-[#e91e63] pt-[13px] pl-[42px] font-['Liberation_Sans',sans-serif] text-[20px] shadow-[0_4px_24px_rgba(0,0,0,0.28)]">
      <div className="flex h-[38px] w-[500px] items-center rounded-lg border border-[#888] bg-[#eeeeee]">
        <button className="mb-px h-[53px] w-[249px] shrink-0 rounded-lg bg-white pb-[2px] font-bold text-[#e91e63] shadow-[0_5px_20px_rgba(0,0,0,0.55)]">Support</button>
        <button className="flex-1 pb-[3px] text-[#555]">Team</button>
      </div>
    </header>
  );
}

function ContactPanel() {
  return (
    <section className="flex w-[487px] shrink-0 flex-col border-r border-[#808080] bg-white">
      <div className="mr-px flex h-[220px] flex-col border-r border-b border-r-[#dcdcdc] border-b-[#808080] bg-[#eeeeee]">
        <div className="flex h-[64px] items-center text-[17.300px] font-light text-black">
          <span className="ml-[52px] w-[194px]">Unassigned</span>
          <span className="w-[144px] font-bold">Open</span>
          <span>Close</span>
        </div>
        <div className="mt-[25px] flex h-[50px] items-center pr-[29px] pl-[44px]">
          <Avatar className="h-[50px] w-[50px]" />
          <span className="ml-[13px] flex-1 pb-[4px] text-[18px] tracking-[0.300px] text-[#333]">Jessica</span>
          <span className="mb-[2px] h-0 w-0 border-x-4 border-t-4 border-x-transparent border-t-[#222]" />
        </div>
        <div className="mt-[28px] flex pl-[30px]">
          <MdSearch className="h-[30px] w-[30px] text-[#a5a5a5]" />
          <div className="ml-[17px] flex h-[40px] w-[395px] items-center border-b border-[#d2d2d2] text-[17.600px] text-[#aaa]">Search Contacts</div>
        </div>
      </div>
      <div className="mr-px flex h-[87px] items-center bg-[#ebebeb] pr-[12px] pl-[13px]">
        <WhatsAppBadge className="h-[37px] w-[37px]" glyph="h-[25px] w-[25px]" />
        <div className="ml-[13px] flex-1 pt-[4px]">
          <div className="flex h-[25px] items-center text-[20.200px] font-medium text-[#f44336]">
            <MdOutlineWarningAmber className="mr-[6px] h-[30px] w-[30px]" />
            Robert
          </div>
          <div className="pt-px text-[16.500px] leading-[24px] font-light text-[#2b3350]">Hello!</div>
        </div>
        <span className="pb-[7px] text-[16.500px] text-[#888]">1:54</span>
      </div>
    </section>
  );
}

function Bubble({ text, time, mine = false }: { text: string; time: string; mine?: boolean }) {
  return (
    <div className={mine ? "relative mt-[12px] mr-[19px] self-end" : "relative mt-[9px] ml-[19px] self-start"}>
      <div
        className={
          mine
            ? "flex h-[70px] w-[73px] flex-col rounded-lg bg-[#dcf5c6] pl-[9px] shadow-[0_1px_3px_rgba(0,0,0,0.15)]"
            : "flex h-[70px] w-[73px] flex-col rounded-lg bg-white pl-[8.500px] shadow-[0_1px_3px_rgba(0,0,0,0.15)]"
        }
      >
        <span className="mt-[13px] text-[17px] leading-[24px] font-light text-[#1f2440]">{text}</span>
        <div className="mt-[5px] flex items-center justify-between pr-[9px]">
          <span className="pt-px text-[13px] leading-[20px] font-light text-[#999]">{time}</span>
          <WhatsAppBadge className="h-[19px] w-[19px]" glyph="h-[13px] w-[13px]" />
        </div>
      </div>
      <span
        className={
          mine
            ? "absolute top-[45px] -right-[12px] h-0 w-0 border-r-[12px] border-b-[13px] border-r-transparent border-b-[#dcf5c6]"
            : "absolute top-[44px] -left-[13px] h-0 w-0 border-b-[13px] border-l-[13px] border-b-white border-l-transparent"
        }
      />
    </div>
  );
}

function Chat() {
  return (
    <section className="flex min-w-0 flex-1 flex-col border-l border-[#808080]">
      <div className="flex h-[75px] shrink-0 bg-[#eeeeee] pl-[12px]">
        <WhatsAppBadge className="mt-[6px] h-[63px] w-[63px]" glyph="h-[44px] w-[44px]" />
        <span className="mt-[14px] ml-[14px] text-[20.300px] leading-[30px] text-[#f4837c]">Robert</span>
        <div className="mt-[15px] ml-[7px] flex h-[26px] w-[136px] items-center rounded-full bg-[#f44336] pl-[8px] text-white">
          <MdOutlineWarningAmber className="mb-[2px] h-[17px] w-[17px]" />
          <span className="mb-[2px] ml-[6px] text-[9.600px] font-bold whitespace-nowrap">NON ACTIVE PROFILE</span>
        </div>
        <button className="mt-[20px] ml-auto flex h-[35px] w-[149px] items-center rounded-[3px] bg-[#50ae58] pl-[23px] text-[12.700px] font-medium whitespace-nowrap text-white shadow-[0_2px_4px_rgba(76,175,80,0.45)]">
          BUILD PROFILE
          <span className="mb-[4px] ml-[7px] h-0 w-0 border-x-4 border-t-4 border-x-transparent border-t-white" />
        </button>
        <WhatsAppBadge className="mt-[23px] mr-[13px] ml-[14px] h-[30px] w-[30px]" glyph="h-[21px] w-[21px]" />
      </div>
      <div className="relative flex min-h-0 flex-1 flex-col bg-[#e4dcd6]">
        <Wallpaper />
        <Bubble text="Hello" time="1:33" />
        <Bubble text="Hello!" time="1:54" mine />
      </div>
      <div className="flex h-[99px] shrink-0 items-center bg-[#f0f0f0] text-[#a8a8a8]">
        <FaRegSmile className="mb-px ml-[23px] h-[29px] w-[29px]" />
        <FaPaperclip className="mb-px ml-[47px] h-[30px] w-[28px]" />
        <div className="ml-[24px] flex h-[59px] w-[929px] items-center rounded-[5px] bg-white pt-px pl-[19px] text-[17.450px] font-light text-black">
          Do you need help with anything?
          <span className="h-[21px] w-px bg-black" />
        </div>
        <FaPaperPlane className="mb-px ml-[23px] h-[30px] w-[30px]" />
        <FaHashtag className="mb-[2px] ml-[53px] h-[30px] w-[29px]" />
      </div>
    </section>
  );
}

function CallWidget() {
  return (
    <div className="absolute top-[124px] right-0 z-30 h-[102px] w-[25px] overflow-hidden bg-[#2d2d2d]">
      <svg viewBox="0 0 25 102" className="h-full w-full" aria-hidden="true">
        <defs>
          <clipPath id="caller">
            <circle cx="29" cy="28" r="16.500" />
          </clipPath>
        </defs>
        <g clipPath="url(#caller)">
          <rect x="12" y="10" width="20" height="36" fill="#6b5f58" />
          <rect x="12" y="22" width="20" height="7" fill="#39322f" />
          <rect x="14" y="28" width="8" height="10" fill="#8c857c" />
          <rect x="23" y="29" width="6" height="20" fill="#b5342c" />
        </g>
        <circle cx="29" cy="28" r="17" fill="none" stroke="#c8c8c8" strokeWidth="1" />
        <path d="M2 75 H25" stroke="#4f9e6b" strokeWidth="2" strokeDasharray="2 2" />
      </svg>
    </div>
  );
}

export default function App() {
  return (
    <div className="relative flex h-[1080px] w-[1920px] overflow-hidden bg-[#ededed] font-[Roboto,sans-serif]">
      <Sidebar />
      <div className="flex min-w-0 flex-1 flex-col">
        <TopBar />
        <main className="mt-[26px] mr-[19px] mb-[20px] ml-[19px] flex-1 bg-white px-[23px] pt-[23px] pb-[24px]">
          <div className="flex h-full border border-[#808080]">
            <ContactPanel />
            <Chat />
          </div>
        </main>
      </div>
      <CallWidget />
    </div>
  );
}
